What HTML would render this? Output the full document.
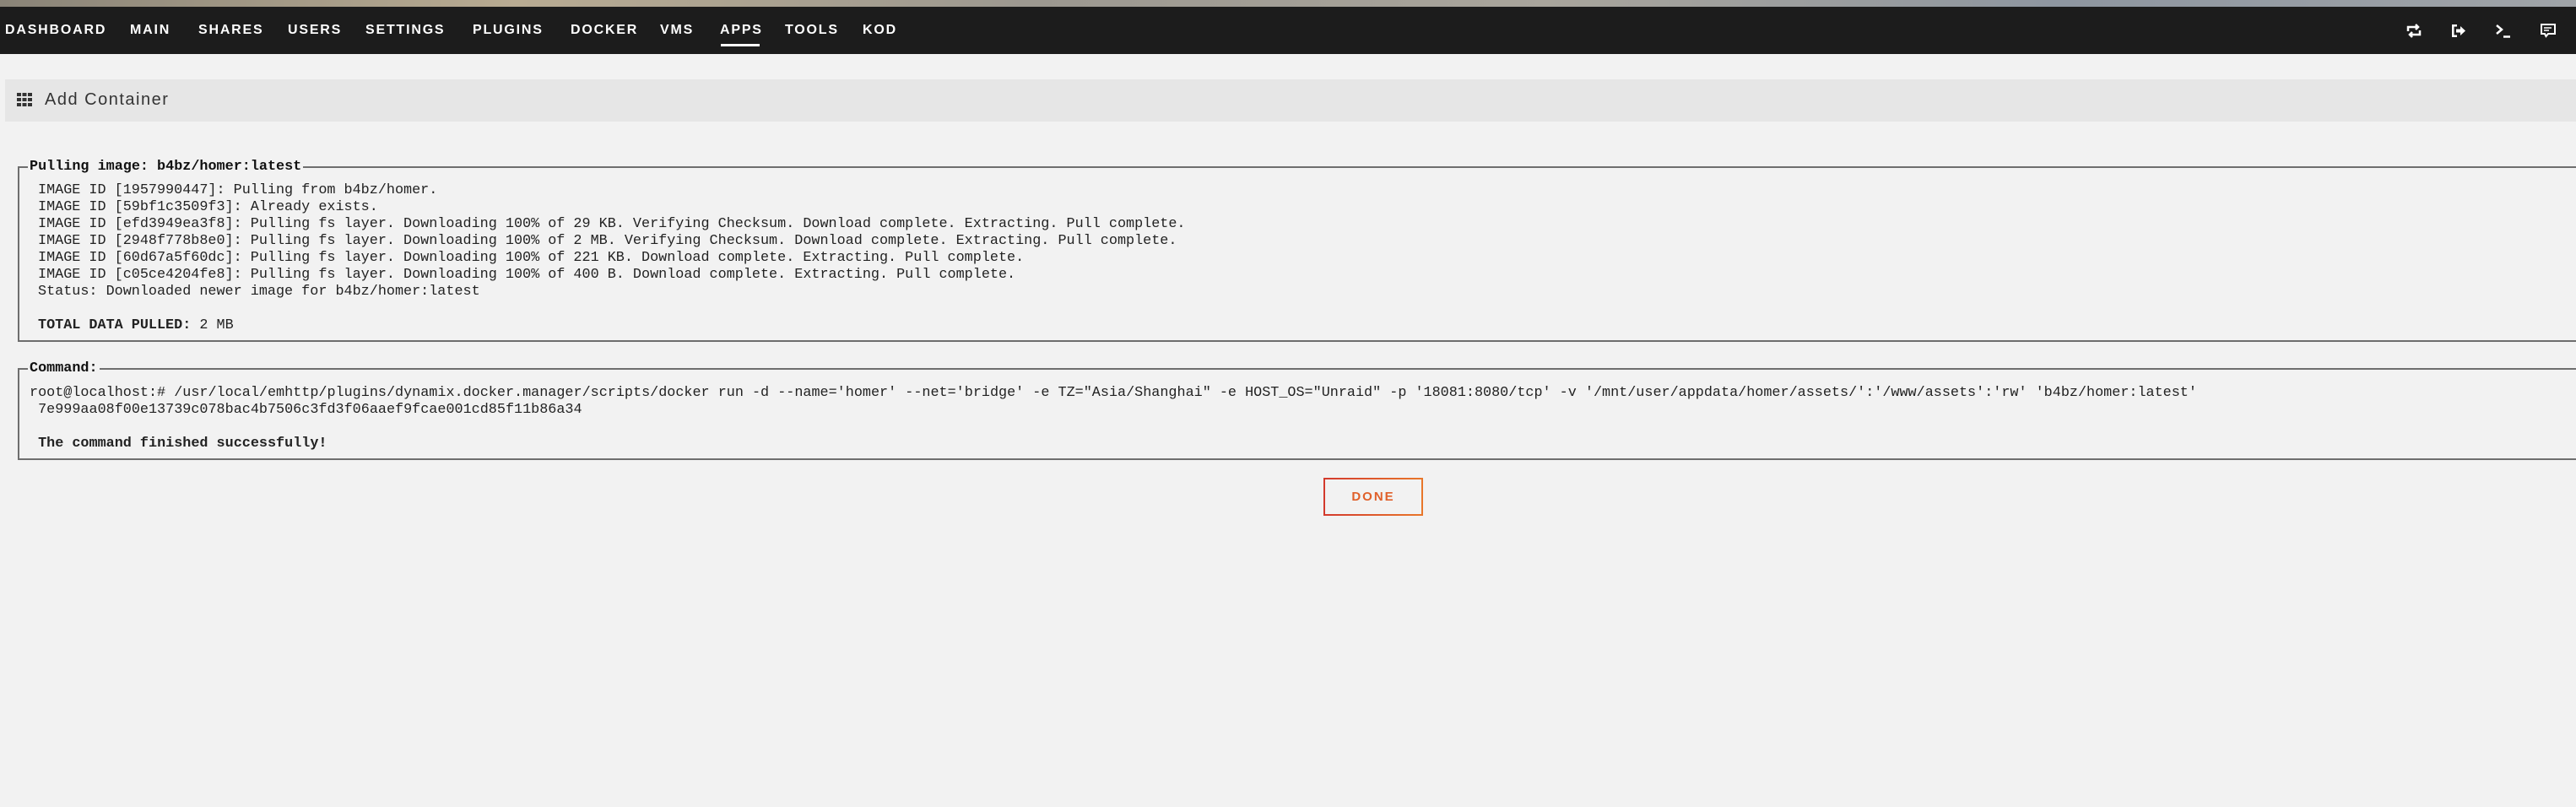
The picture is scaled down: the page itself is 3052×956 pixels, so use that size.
<!DOCTYPE html>
<html><head><meta charset="utf-8"><style>
*{margin:0;padding:0;box-sizing:border-box}
body{width:3052px;height:956px;background:#f2f2f2;position:relative;overflow:hidden;font-family:"Liberation Sans",sans-serif}
.top{position:absolute;left:0;top:0;width:3052px;height:8px;background:linear-gradient(90deg,#8a8478,#b8ab92 20%,#9c9890 40%,#a9a59c 60%,#8e96a0 80%,#a0a4a8)}
.nav{position:absolute;left:0;top:8px;width:3052px;height:56px;background:#1c1c1c}
.nav span{position:absolute;top:18px;color:#fff;font-weight:bold;font-size:16px;letter-spacing:1.8px;line-height:20px}
.ul{position:absolute;left:854px;top:44px;width:46px;height:3px;background:#fff}
.hdr{position:absolute;left:6px;top:94px;width:3046px;height:50px;background:#e6e6e6}
.hdr .t{position:absolute;left:47px;top:13px;font-size:20px;color:#333;letter-spacing:1.5px}
.mono{font-family:"Liberation Mono",monospace;font-size:16.8px;color:#222;white-space:pre;position:absolute;line-height:20px}
.fs{position:absolute;border:2px solid #6e6e6e;border-right:none}
.lg{position:absolute;background:#f2f2f2;font-family:"Liberation Mono",monospace;font-weight:bold;font-size:16.8px;color:#111;padding:0 2px;line-height:20px}
.btn{position:absolute;left:1568px;top:566px;width:118px;height:45px;border:2px solid;border-image:linear-gradient(90deg,#d33a2c,#e8762a) 1;color:#e0602a;font-weight:bold;font-size:15px;letter-spacing:2px;text-align:center;line-height:41px;background:#f2f2f2}
</style></head><body>
<div class="top"></div>
<div class="nav">
<span style="left:6px">DASHBOARD</span>
<span style="left:154px">MAIN</span>
<span style="left:235px">SHARES</span>
<span style="left:341px">USERS</span>
<span style="left:433px">SETTINGS</span>
<span style="left:560px">PLUGINS</span>
<span style="left:676px">DOCKER</span>
<span style="left:782px">VMS</span>
<span style="left:853px">APPS</span>
<span style="left:930px">TOOLS</span>
<span style="left:1022px">KOD</span>
<div class="ul"></div>
<svg style="position:absolute;left:2851px;top:20px" width="18" height="17" viewBox="0 0 18 17" fill="none" stroke="#fff" stroke-width="2.5"><path d="M2 9V4h12M11 1l3 3-3 3M16 8v5H4M7 16l-3-3 3-3"/></svg>
<svg style="position:absolute;left:2904px;top:20px" width="18" height="17" viewBox="0 0 18 17"><path d="M1 1h6v2.5H3.5v10H7V16H1z" fill="#fff"/><path d="M6 6.5h5V3l6 5.5-6 5.5v-3.5H6z" fill="#fff"/></svg>
<svg style="position:absolute;left:2957px;top:20px" width="18" height="17" viewBox="0 0 18 17" fill="none" stroke="#fff" stroke-width="2.5"><path d="M1 2l6 5-6 5"/><path d="M9 15.5h8" stroke-width="2.5"/></svg>
<svg style="position:absolute;left:3010px;top:20px" width="18" height="17" viewBox="0 0 18 17" fill="none" stroke="#fff" stroke-width="2"><path d="M1 1h16v11H9l-2.5 3L5 12H1z"/><path d="M4 5h9M4 8h6" stroke-width="1.6"/></svg>
</div>
<div class="hdr">
<svg style="position:absolute;left:14px;top:16px" width="18" height="16" viewBox="0 0 18 16" fill="#333"><rect x="0" y="0" width="5" height="4"/><rect x="6.5" y="0" width="5" height="4"/><rect x="13" y="0" width="5" height="4"/><rect x="0" y="6" width="5" height="4"/><rect x="6.5" y="6" width="5" height="4"/><rect x="13" y="6" width="5" height="4"/><rect x="0" y="12" width="5" height="4"/><rect x="6.5" y="12" width="5" height="4"/><rect x="13" y="12" width="5" height="4"/></svg>
<div class="t">Add Container</div>
</div>

<div class="fs" style="left:21px;top:197px;width:3031px;height:208px"></div>
<div class="lg" style="left:33px;top:188px">Pulling image: b4bz/homer:latest</div>
<div class="mono" style="left:45px;top:216px">IMAGE ID [1957990447]: Pulling from b4bz/homer.
IMAGE ID [59bf1c3509f3]: Already exists.
IMAGE ID [efd3949ea3f8]: Pulling fs layer. Downloading 100% of 29 KB. Verifying Checksum. Download complete. Extracting. Pull complete.
IMAGE ID [2948f778b8e0]: Pulling fs layer. Downloading 100% of 2 MB. Verifying Checksum. Download complete. Extracting. Pull complete.
IMAGE ID [60d67a5f60dc]: Pulling fs layer. Downloading 100% of 221 KB. Download complete. Extracting. Pull complete.
IMAGE ID [c05ce4204fe8]: Pulling fs layer. Downloading 100% of 400 B. Download complete. Extracting. Pull complete.
Status: Downloaded newer image for b4bz/homer:latest

<b>TOTAL DATA PULLED:</b> 2 MB</div>

<div class="fs" style="left:21px;top:436px;width:3031px;height:109px"></div>
<div class="lg" style="left:33px;top:427px">Command:</div>
<div class="mono" style="left:35px;top:456px">root@localhost:# /usr/local/emhttp/plugins/dynamix.docker.manager/scripts/docker run -d --name='homer' --net='bridge' -e TZ="Asia/Shanghai" -e HOST_OS="Unraid" -p '18081:8080/tcp' -v '/mnt/user/appdata/homer/assets/':'/www/assets':'rw' 'b4bz/homer:latest'
 7e999aa08f00e13739c078bac4b7506c3fd3f06aaef9fcae001cd85f11b86a34

 <b>The command finished successfully!</b></div>

<div class="btn">DONE</div>
</body></html>
